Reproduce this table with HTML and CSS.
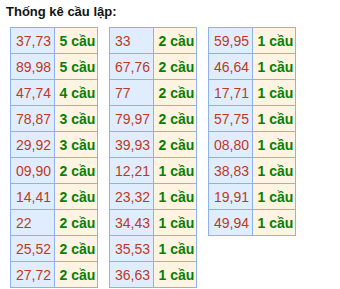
FILE: index.html
```html
<!DOCTYPE html>
<html lang="vi">
<head>
<meta charset="utf-8">
<link rel="stylesheet" href="styles.css">
</head>
<body>
<div class="box">
  <h3 class="title">Thống kê cầu lập:</h3>
  <div class="tables">
    <table class="stat">
      <tr><td class="num">37,73</td><td class="cnt">5 cầu</td></tr>
      <tr><td class="num">89,98</td><td class="cnt">5 cầu</td></tr>
      <tr><td class="num">47,74</td><td class="cnt">4 cầu</td></tr>
      <tr><td class="num">78,87</td><td class="cnt">3 cầu</td></tr>
      <tr><td class="num">29,92</td><td class="cnt">3 cầu</td></tr>
      <tr><td class="num">09,90</td><td class="cnt">2 cầu</td></tr>
      <tr><td class="num">14,41</td><td class="cnt">2 cầu</td></tr>
      <tr><td class="num">22</td><td class="cnt">2 cầu</td></tr>
      <tr><td class="num">25,52</td><td class="cnt">2 cầu</td></tr>
      <tr><td class="num">27,72</td><td class="cnt">2 cầu</td></tr>
    </table>
    <table class="stat">
      <tr><td class="num">33</td><td class="cnt">2 cầu</td></tr>
      <tr><td class="num">67,76</td><td class="cnt">2 cầu</td></tr>
      <tr><td class="num">77</td><td class="cnt">2 cầu</td></tr>
      <tr><td class="num">79,97</td><td class="cnt">2 cầu</td></tr>
      <tr><td class="num">39,93</td><td class="cnt">2 cầu</td></tr>
      <tr><td class="num">12,21</td><td class="cnt">1 cầu</td></tr>
      <tr><td class="num">23,32</td><td class="cnt">1 cầu</td></tr>
      <tr><td class="num">34,43</td><td class="cnt">1 cầu</td></tr>
      <tr><td class="num">35,53</td><td class="cnt">1 cầu</td></tr>
      <tr><td class="num">36,63</td><td class="cnt">1 cầu</td></tr>
    </table>
    <table class="stat">
      <tr><td class="num">59,95</td><td class="cnt">1 cầu</td></tr>
      <tr><td class="num">46,64</td><td class="cnt">1 cầu</td></tr>
      <tr><td class="num">17,71</td><td class="cnt">1 cầu</td></tr>
      <tr><td class="num">57,75</td><td class="cnt">1 cầu</td></tr>
      <tr><td class="num">08,80</td><td class="cnt">1 cầu</td></tr>
      <tr><td class="num">38,83</td><td class="cnt">1 cầu</td></tr>
      <tr><td class="num">19,91</td><td class="cnt">1 cầu</td></tr>
      <tr><td class="num">49,94</td><td class="cnt">1 cầu</td></tr>
    </table>
  </div>
</div>
</body>
</html>
```
FILE: styles.css
```css
html, body {
  margin: 0;
  padding: 0;
  background: #ffffff;
}
.box {
  padding: 3px 6px 4px;
  font-family: "Liberation Sans", Arial, sans-serif;
}
.title {
  margin: 0 0 6px;
  font-size: 13px;
  line-height: 18px;
  font-weight: bold;
  color: #111111;
}
.tables {
  display: flex;
  align-items: flex-start;
  gap: 11px;
  padding-left: 4px;
}
.stat {
  border-collapse: collapse;
  width: 88px;
  table-layout: fixed;
}
.stat td {
  border: 1px solid #8fb2ee;
  height: 26px;
  padding: 0 0 0 5px;
  font-size: 14px;
  line-height: 16px;
  white-space: nowrap;
  box-sizing: border-box;
}
.num {
  background: #e0edff;
  color: #bd3a22;
  padding-left: 6px;
}
.cnt {
  background: #fff4e2;
  color: #058005;
  font-weight: bold;
}
```
